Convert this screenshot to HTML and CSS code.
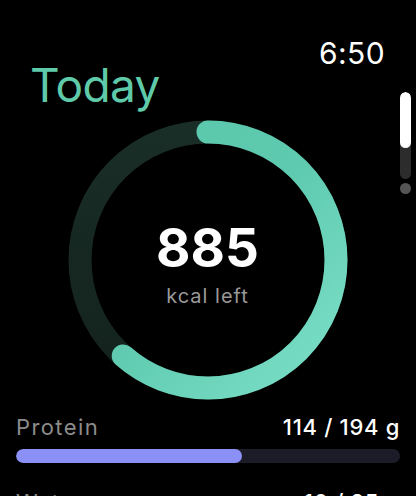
FILE: index.html
```html
<!DOCTYPE html>
<html lang="en">
<head>
<meta charset="utf-8">
<title>Today</title>
<link rel="stylesheet" href="styles.css">
</head>
<body>
<div class="screen">
  <div class="status"><span class="time">6:50</span></div>
  <h1 class="title">Today</h1>
  <div class="ring">
    <svg class="ring-svg" width="280" height="280" viewBox="0 0 280 280">
      <defs>
        <linearGradient id="trackGrad" x1="0" y1="0" x2="0" y2="280" gradientUnits="userSpaceOnUse">
          <stop offset="0" stop-color="#1a2e28"/>
          <stop offset="1" stop-color="#13211c"/>
        </linearGradient>
        <linearGradient id="progGrad" x1="40" y1="240" x2="240" y2="40" gradientUnits="userSpaceOnUse">
          <stop offset="0" stop-color="#76dbc3"/>
          <stop offset="0.55" stop-color="#5dc9ae"/>
          <stop offset="1" stop-color="#5bc9ad"/>
        </linearGradient>
      </defs>
      <circle cx="140" cy="140" r="128" fill="none" stroke="url(#trackGrad)" stroke-width="23"/>
      <circle cx="140" cy="140" r="128" fill="none" stroke="url(#progGrad)" stroke-width="23" stroke-linecap="round" stroke-dasharray="494.6 1000" transform="rotate(-90 140 140)"/>
    </svg>
    <div class="ring-center">
      <div class="kcal">885</div>
      <div class="kcal-label">kcal left</div>
    </div>
  </div>
  <div class="macro">
    <div class="macro-head"><span class="macro-name">Protein</span><span class="macro-val">114 / 194 g</span></div>
    <div class="bar"><div class="bar-fill protein" style="width:58.76%"></div></div>
  </div>
  <div class="macro">
    <div class="macro-head"><span class="macro-name">Water</span><span class="macro-val">10 / 25 g</span></div>
    <div class="bar"><div class="bar-fill water" style="width:40%"></div></div>
  </div>
  <div class="scroll">
    <div class="scroll-track"><div class="scroll-thumb"></div></div>
    <div class="scroll-dot"></div>
  </div>
</div>
</body>
</html>
```

FILE: styles.css
```css
html, body {
  margin: 0;
  padding: 0;
  background: #000;
}
body {
  font-family: Inter, "Noto Sans", sans-serif;
  color: #fff;
  overflow: hidden;
}
.screen {
  position: relative;
  width: 416px;
  height: 496px;
  overflow: hidden;
}
.status {
  display: flex;
  justify-content: flex-end;
  padding: 41px 31px 0 0;
  height: 24px;
}
.time {
  font-size: 30px;
  line-height: 24px;
  font-weight: 400;
  color: #fff;
  letter-spacing: 0.4px;
}
.title {
  margin: 0;
  padding-left: 30px;
  font-size: 46px;
  line-height: 40px;
  font-weight: 400;
  color: #5fcaa9;
  letter-spacing: -0.6px;
}
.ring {
  display: grid;
  width: 280px;
  height: 280px;
  margin: 14.5px 0 0 67.5px;
}
.ring-svg, .ring-center {
  grid-area: 1 / 1;
}
.ring-svg {
  display: block;
}
.ring-center {
  display: flex;
  flex-direction: column;
  align-items: center;
  padding-top: 108px;
}
.kcal {
  font-size: 53px;
  line-height: 40px;
  font-weight: 700;
  color: #fff;
}
.kcal-label {
  margin-top: 18px;
  font-size: 20px;
  line-height: 20px;
  color: #999;
  letter-spacing: 1px;
}
.macro {
  padding: 0 16px;
  margin-top: 16.5px;
}
.macro + .macro {
  margin-top: 28px;
}
.macro-head {
  display: flex;
  justify-content: space-between;
  font-size: 22px;
  line-height: 22px;
}
.macro-name {
  color: #8c8c8c;
  letter-spacing: 1.4px;
}
.macro-val {
  color: #fff;
  font-weight: 500;
  letter-spacing: 0.7px;
}
.bar {
  margin-top: 11px;
  height: 14px;
  border-radius: 7px;
  background: #1c1c28;
  overflow: hidden;
}
.bar-fill {
  height: 100%;
  border-radius: 7px;
}
.bar-fill.protein {
  background: #8a90f5;
}
.bar-fill.water {
  background: #5fb8f0;
}
.scroll {
  position: absolute;
  left: 400px;
  top: 92px;
  width: 11px;
  display: flex;
  flex-direction: column;
  gap: 4px;
}
.scroll-track {
  height: 87px;
  border-radius: 6px;
  background: #2c2c2c;
  overflow: hidden;
}
.scroll-thumb {
  height: 56px;
  border-radius: 6px;
  background: #fff;
}
.scroll-dot {
  width: 11px;
  height: 11px;
  border-radius: 50%;
  background: #555;
}
```
